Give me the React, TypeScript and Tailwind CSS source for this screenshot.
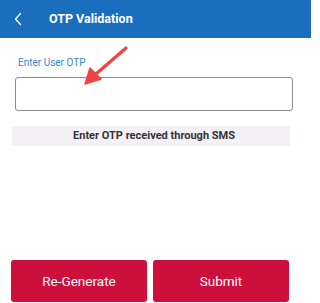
import React from 'react';

function BackIcon() {
  return (
    <svg width="10" height="14" viewBox="0 0 10 14" fill="none">
      <path d="M7.5 1.5 L2.5 7 L7.5 12.5" stroke="white" strokeWidth="1.3" strokeLinecap="round" strokeLinejoin="round" />
    </svg>
  );
}

function PointerArrow() {
  return (
    <svg
      className="pointer-events-none absolute left-0 top-0"
      width="311"
      height="120"
      viewBox="0 0 311 120"
    >
      <path d="M126 48 L96 74" stroke="#ef4444" strokeWidth="3.2" strokeLinecap="round" />
      <path d="M85 84 L90 68 L101 79 Z" fill="#ef4444" stroke="#ef4444" strokeWidth="1.5" strokeLinejoin="round" />
    </svg>
  );
}

export default function App() {
  return (
    <div
      className="relative flex h-[303px] w-[311px] flex-col bg-white"
      style={{ fontFamily: 'Roboto, "Liberation Sans", sans-serif' }}
    >
      <div className="flex h-[38px] shrink-0 items-center bg-[#1a6ebd]">
        <div className="ml-[13px] flex w-[36px] items-center">
          <BackIcon />
        </div>
        <span className="text-[12.5px] font-bold text-white">OTP Validation</span>
      </div>

      <div className="flex flex-1 flex-col">
        <label className="ml-[18px] mt-[18px] text-[10px] leading-[14px] text-[#3a86cf]">
          Enter User OTP
        </label>
        <input
          className="ml-[15px] mt-[7px] h-[34px] w-[278px] rounded-[3px] border border-[#8a8a8a] px-2 text-sm outline-none"
          type="text"
        />
        <div className="ml-[12px] mt-[15px] flex h-[20px] w-[278px] items-center justify-center bg-[#f3f1f4] pl-[6px] text-[11px] font-bold text-[#333]">
          Enter OTP received through SMS
        </div>
      </div>

      <div className="mb-px flex gap-[6px] pl-[11px]">
        <button className="flex h-[42px] w-[136px] items-center justify-center rounded-[3px] bg-[#cd0f3c] text-[13.5px] text-white">
          Re-Generate
        </button>
        <button className="flex h-[42px] w-[136px] items-center justify-center rounded-[3px] bg-[#cd0f3c] text-[13.5px] text-white">
          Submit
        </button>
      </div>

      <PointerArrow />
    </div>
  );
}
